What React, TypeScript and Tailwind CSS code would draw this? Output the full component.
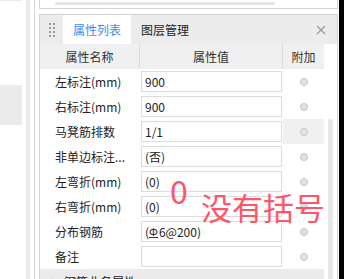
import React from 'react';

interface Row {
  label: string;
  value: React.ReactNode;
  hover?: boolean;
}

const rows: Row[] = [
  { label: '左标注(mm)', value: '900' },
  { label: '右标注(mm)', value: '900' },
  { label: '马凳筋排数', value: '1/1', hover: true },
  { label: '非单边标注...', value: '(否)' },
  { label: '左弯折(mm)', value: '(0)' },
  { label: '右弯折(mm)', value: '(0)' },
  {
    label: '分布钢筋',
    value: (
      <>
        (<span className="inline-block leading-[11px] border-b border-[#333] text-[11px] mr-px">Φ</span>6@200)
      </>
    ),
  },
  { label: '备注', value: '' },
];

export default function App() {
  return (
    <div className="relative flex w-[344px] h-[279px] overflow-hidden bg-white text-[12px] text-[#333] font-['Noto_Sans_CJK_SC','Noto_Sans',sans-serif]">
      {/* left strip */}
      <div className="w-[26px] shrink-0 flex flex-col">
        <div className="h-px w-[22px] bg-[#ececec]" />
        <div className="h-[84px]" />
        <div className="h-[40px] w-[22px] bg-[#ebebeb]" />
      </div>
      <div className="w-[4px] shrink-0 bg-[#ececec]" />
      <div className="w-[4px] shrink-0" />
      <div className="w-px shrink-0 bg-[#d6d6d6]" />
      <div className="w-[4px] shrink-0" />

      {/* main column */}
      <div className="w-[299px] shrink-0 flex flex-col">
        <div className="h-[9px] border-x border-b border-[#d4d4d4] px-[15px] pt-[2px]">
          <div className="h-[3px] w-[220px] rounded-full bg-[#e6e6e6]" />
        </div>
        <div className="h-[5px]" />
        <div className="flex-1 flex flex-col border-x border-t border-[#d4d4d4] min-h-0">
          {/* tabs header */}
          <div className="h-[29px] shrink-0 flex items-stretch bg-[#ececec]">
            <div className="w-[23px] flex items-center justify-center">
              <div className="grid grid-cols-2 gap-x-[2px] gap-y-[2px]">
                {Array.from({ length: 8 }).map((_, i) => (
                  <div key={i} className="w-[2px] h-[2px] bg-[#9a9a9a]" />
                ))}
              </div>
            </div>
            <div className="bg-white px-[10px] flex items-center text-[#3b8cf5] text-[12px]">属性列表</div>
            <div className="px-[10px] flex items-center text-[#222]">图层管理</div>
            <div className="flex-1" />
            <div className="w-[30px] flex items-center justify-center pr-[2px]">
              <svg width="10" height="10" viewBox="0 0 10 10">
                <path d="M1 1L9 9M9 1L1 9" stroke="#9a9a9a" strokeWidth="1.2" />
              </svg>
            </div>
          </div>

          {/* table + scroll */}
          <div className="flex-1 flex min-h-0">
            <div className="w-[284px] shrink-0 flex flex-col">
              <div className="h-[25px] shrink-0 flex bg-[#f0f0f0]">
                <div className="w-[100px] border-r border-[#dcdcdc] flex items-center justify-center">属性名称</div>
                <div className="w-[143px] border-r border-[#dcdcdc] flex items-center justify-center">属性值</div>
                <div className="flex-1 flex items-center justify-center">附加</div>
              </div>
              {rows.map((r) => (
                <div key={r.label} className="h-[25px] shrink-0 flex">
                  <div className="w-[100px] flex items-center pl-[15px] text-[#222]">{r.label}</div>
                  <div className="w-[143px] px-px py-[2px]">
                    <div className="h-[21px] border border-[#dcdcdc] bg-white flex items-center pl-[3px] text-[#222] whitespace-nowrap">
                      {r.value}
                    </div>
                  </div>
                  <div className={`flex-1 flex items-center justify-center ${r.hover ? 'bg-[#f0f0f0]' : ''}`}>
                    <div className="w-[8px] h-[8px] rounded-full bg-[#e2e2e2] border border-[#c4c4c4]" />
                  </div>
                </div>
              ))}
              <div className="h-[25px] shrink-0 flex items-center bg-[#ebebeb] pl-[10px] gap-[6px] text-[#222]">
                <span className="text-[8px] text-[#888]">▶</span>
                <span>钢筋业务属性</span>
              </div>
            </div>
            <div className="flex-1 flex flex-col pl-[4px]">
              <div className="h-[75px]" />
              <div className="w-[5px] flex-1 rounded-t-full bg-[#e6e6e6]" />
            </div>
          </div>
        </div>
      </div>
      <div className="w-px shrink-0" />
      <div className="flex-1 bg-black" />

      {/* red annotation */}
      <span className="absolute left-[170px] top-[174px] text-[32px] leading-[32px] text-[#ff5569]">0</span>
      <span className="absolute left-[201px] top-[190px] text-[31px] leading-[33px] text-[#ff5569] whitespace-nowrap">没有括号</span>
    </div>
  );
}
